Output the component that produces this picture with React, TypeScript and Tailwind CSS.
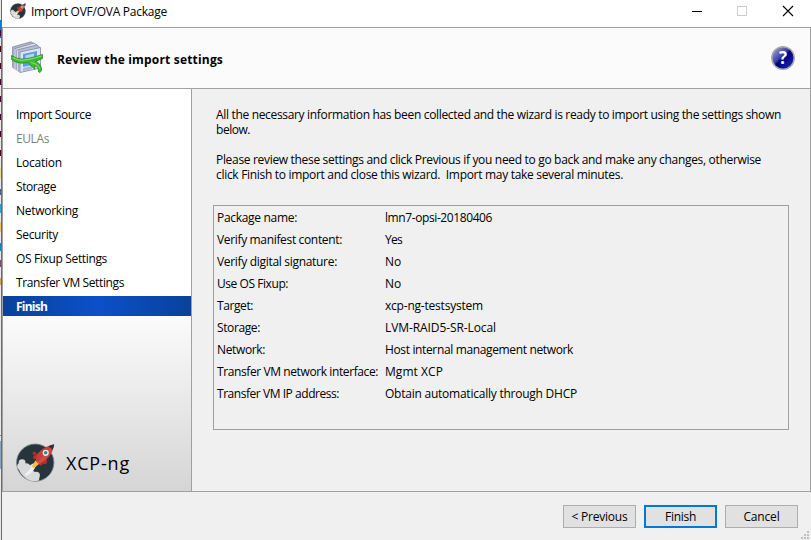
import { useLayoutEffect, useRef, useState } from 'react';

// Text whose tracking is tuned so that it spans exactly `w` pixels.
function Fit({ w, children, className = '' }: { w: number; children: string; className?: string }) {
  const ref = useRef<HTMLSpanElement>(null);
  const [ls, setLs] = useState(0);
  useLayoutEffect(() => {
    if (ref.current) setLs((w - ref.current.getBoundingClientRect().width) / children.length);
  }, []);
  return (
    <span ref={ref} className={`inline-block whitespace-pre ${className}`} style={{ letterSpacing: ls }}>
      {children}
    </span>
  );
}

function Rocket({ className }: { className: string }) {
  return (
    <svg viewBox="0 0 38.500 38.500" className={className}>
      <circle cx="19" cy="19.400" r="18.400" fill="#26343c" stroke="#75828a" strokeWidth=".8" />
      <g fill="#d8d9da">
        <circle cx="6" cy="19.500" r="3.400" />
        <circle cx="4.500" cy="23" r="3.300" />
        <circle cx="10" cy="24" r="4" />
        <circle cx="20" cy="32" r="3.600" />
        <path d="M1.500 22q6-3 11 .5l5-2.500 2.500 2.500-3 5 4 3q3 3 1.500 6.500-6 2-12-1.500-7.500-5-9-13.500z" />
      </g>
      <path d="M16.500 20.500l3 2.500-4.500 6.500-5 3-1.500-1.500 5.500-5z" fill="#f0f0f0" />
      <path d="M19.500 17l3.500 3.500-5.500 4.500-2-2z" fill="#f7bd42" />
      <g fill="#b52f2e">
        <circle cx="18" cy="10" r="1.600" />
        <circle cx="18.500" cy="14" r="1.700" />
        <circle cx="29" cy="19" r="1.700" />
        <circle cx="24.500" cy="20.500" r="1.700" />
        <path d="M18 12l5-3 3-1-6 9zM24 20l6-6 .5 4-3 3z" />
      </g>
      <path d="M19.500 17.500Q21 5 37.500 1.500 36 15 23 21z" fill="#c83d35" />
      <path d="M21 19L35 4q-.5 9-12 17z" fill="#dd5a4d" opacity=".5" />
      <path d="M32 3.200Q35 1.800 37.700 1.300q-.2 2.700-1.500 5.400z" fill="#26343c" />
      <circle cx="29.300" cy="9.700" r="2.400" fill="#2a8993" stroke="#e7eeee" strokeWidth="1.300" />
    </svg>
  );
}

function ImportIcon() {
  return (
    <svg viewBox="0 0 32 33" className="ml-2 mt-[-2px] h-[33px] w-8">
      <g stroke="#7f849c" strokeWidth=".8" strokeLinejoin="round">
        <path d="M1.500 6L20 .8 23 3v20L4 28l-2.500-2z" fill="#b5bad0" />
        <path d="M4 7.500L23 2l3 2v20L6 29l-2-2z" fill="#dadeeb" />
        <path d="M6 9l20-5 2.500 2v20L9 31l-3-2z" fill="#b6bed6" />
        <path d="M9 11l20.500-4.500V27L9 31.500z" fill="#dfe4f2" />
      </g>
      <path d="M1.500 6.500L9 11v20.500l-7.500-5z" fill="#a3a9c2" />
      <path d="M4 8v20M6.500 9.500v20" stroke="#e0e3ef" strokeWidth=".9" />
      <path d="M12 13l14-3v13l-14 3z" fill="#5c9de7" />
      <path d="M14.500 14.500l8.500-2v3.500l-8.500 2z" fill="#b5d5f5" />
      <path d="M12 27l9-2v3l-9 2z" fill="#9fb9d8" />
      <path d="M.6 14.500Q6 18 10 18q8 0 21.500-4.500v4Q27 19.500 24.500 20q6.500 3.500 6 9.500l-1.500 2-1.500-.8q.3-5-4-5.700l.5 3.500-7.500-7Q12 22.500 8.500 22 4 21.500.6 18.500z" fill="#3fba32" stroke="#20902a" strokeWidth=".8" />
      <path d="M2 16.500q5 3 9 2.800 8-.4 19.500-4.300M20 21.500q7 1.500 9 6.500" fill="none" stroke="#98e878" strokeWidth=".9" />
    </svg>
  );
}

const steps: [string, number][] = [
  ['Import Source', 75], ['EULAs', 33], ['Location', 46], ['Storage', 40], ['Networking', 62],
  ['Security', 42], ['OS Fixup Settings', 91], ['Transfer VM Settings', 108], ['Finish', 31],
];

const rows: [string, number, string, number][] = [
  ['Package name:', 80, 'lmn7-opsi-20180406', 107],
  ['Verify manifest content:', 125, 'Yes', 17],
  ['Verify digital signature:', 120, 'No', 16],
  ['Use OS Fixup:', 71, 'No', 16],
  ['Target:', 36, 'xcp-ng-testsystem', 98],
  ['Storage:', 43, 'LVM-RAID5-SR-Local', 111],
  ['Network:', 48, 'Host internal management network', 188],
  ['Transfer VM network interface:', 161, 'Mgmt XCP', 58],
  ['Transfer VM IP address:', 122, 'Obtain automatically through DHCP', 192],
];

const edge = [34, 50, 67, 83, 100, 118, 135, 154];

export default function App() {
  return (
    <div className="flex h-[540px] w-[811px] overflow-hidden bg-white font-['Open_Sans','Noto_Sans',sans-serif] text-[12px] leading-[15px] text-black">
      <svg viewBox="0 0 3 540" className="h-[540px] w-[3px] shrink-0" shapeRendering="crispEdges">
        <rect width="3" height="540" fill="#e4e8ec" />
        <rect y="20" width="1" height="18" fill="#0878d7" />
        {edge.map((y) => <rect key={y} y={y - 4} width="1" height="6" fill="#4b0028" />)}
        <rect y="168" width="1" height="10" fill="#e4dc8c" />
        <rect y="189" width="1" height="6" fill="#486783" />
        <rect y="204" width="1" height="9" fill="#2ca1de" />
        <rect y="222" width="1" height="10" fill="#ecc471" />
        <rect y="243" width="1" height="8" fill="#1684c7" />
        <rect y="260" width="1" height="7" fill="#775276" />
        <rect y="278" width="1" height="7" fill="#d9a054" />
        <rect y="435" width="1" height="1" fill="#888" />
        <rect y="441" width="1" height="28" fill="#8da4bb" />
        <rect x="1" width="1" height="540" fill="#257fc4" />
        <rect x="2" y="27" width="1" height="465" fill="#a0a0a0" />
        <rect x="2" width="1" height="27" fill="#fff" />
        <rect x="2" y="492" width="1" height="48" fill="#f0f0f0" />
      </svg>
      <div className="flex min-w-0 flex-1 flex-col">
        <header className="flex h-[27px] shrink-0 items-start bg-white">
          <Rocket className="ml-[7px] mt-[3px] h-4 w-4" />
          <Fit w={136} className="ml-[5px] mt-1">Import OVF/OVA Package</Fit>
          <svg viewBox="0 0 110 27" className="ml-auto mr-[11px] h-[27px] w-[110px]" shapeRendering="crispEdges" fill="none">
            <path d="M2 11.500h10" stroke="#000" />
            <path d="M47.500 6.500h9v9h-9z" stroke="#ccc" />
            <path d="M93 6l10 10M103 6l-10 10" stroke="#000" shapeRendering="auto" strokeWidth="1.100" />
          </svg>
        </header>
        <div className="flex h-[62px] shrink-0 items-center border-y border-r border-[#a0a0a0] bg-[#fbfbfb]">
          <ImportIcon />
          <Fit w={166} className="ml-[14px] mt-[2px] font-bold">Review the import settings</Fit>
          <svg viewBox="0 0 24 24" className="ml-auto mr-[15px] h-6 w-6">
            <defs>
              <linearGradient id="help" x2="1" y2="1">
                <stop stopColor="#b4b8e4" /><stop offset=".42" stopColor="#3c3fa6" />
                <stop offset=".5" stopColor="#00007c" /><stop offset="1" stopColor="#2630c8" />
              </linearGradient>
            </defs>
            <circle cx="12" cy="12" r="11.200" fill="url(#help)" stroke="#a9a9ae" strokeWidth="1.500" />
            <text x="12" y="18" textAnchor="middle" fontSize="17" fontWeight="700" fill="#fff" fontFamily="Open Sans">?</text>
          </svg>
        </div>
        <main className="flex h-[403px] shrink-0 border-b border-r border-[#a0a0a0]">
          <nav className="flex w-[189px] shrink-0 flex-col border-r border-[#a0a0a0] bg-[linear-gradient(#fff_0,#fff_52%,#d5d5d5)] pt-[15px]">
            {steps.map(([label, w], i) => (
              <div key={label} className={`mb-1 h-5 pl-[13px] pt-[3px] ${i === 8 ? 'bg-[linear-gradient(90deg,#08429b,#0b50c8_50%,#08429b)] font-bold text-white' : i === 1 ? 'text-[#808080]' : ''}`}>
                <Fit w={w}>{label}</Fit>
              </div>
            ))}
            <div className="mb-[9px] mt-auto flex items-center pl-[13px]">
              <Rocket className="h-[39px] w-[39px]" />
              <Fit w={64} className="ml-[11px] text-[18px] font-medium leading-6">XCP-ng</Fit>
            </div>
          </nav>
          <section className="flex-1 bg-[#f0f0f0] pl-[21px] pt-[18px]">
            <div className="flex h-[98px] flex-col pl-[3px]">
              <div><Fit w={565}>All the necessary information has been collected and the wizard is ready to import using the settings shown</Fit></div>
              <div><Fit w={34}>below.</Fit></div>
              <div className="mt-[15px]"><Fit w={545}>Please review these settings and click Previous if you need to go back and make any changes, otherwise</Fit></div>
              <div><Fit w={407}>click Finish to import and close this wizard.  Import may take several minutes.</Fit></div>
            </div>
            <div className="h-[225px] w-[576px] border border-[#a0a0a0] pl-[3px] pt-1">
              {rows.map(([a, aw, b, bw]) => (
                <div key={a} className="grid h-[22px] grid-cols-[168px_1fr] justify-items-start">
                  <Fit w={aw}>{a}</Fit>
                  <Fit w={bw}>{b}</Fit>
                </div>
              ))}
            </div>
          </section>
        </main>
        <footer className="relative flex flex-1 items-start justify-end gap-2 bg-[#f0f0f0] pr-[13px] pt-[13px]">
          <button className="h-[23px] w-[73px] border border-[#adadad] bg-[#e1e1e1]"><Fit w={56}>{'< Previous'}</Fit></button>
          <button className="h-[23px] w-[73px] border-2 border-[#0078d7] bg-[#e1e1e1]"><Fit w={31}>Finish</Fit></button>
          <button className="h-[23px] w-[73px] border border-[#adadad] bg-[#e1e1e1]"><Fit w={36}>Cancel</Fit></button>
          <svg viewBox="0 0 8 8" className="absolute bottom-[1px] right-[2px] h-2 w-2" fill="#bfbfbf">
            <path d="M6 0h2v2h-2zM3 3h2v2h-2zM6 3h2v2h-2zM0 6h2v2h-2zM3 6h2v2h-2zM6 6h2v2h-2z" />
          </svg>
        </footer>
      </div>
    </div>
  );
}
